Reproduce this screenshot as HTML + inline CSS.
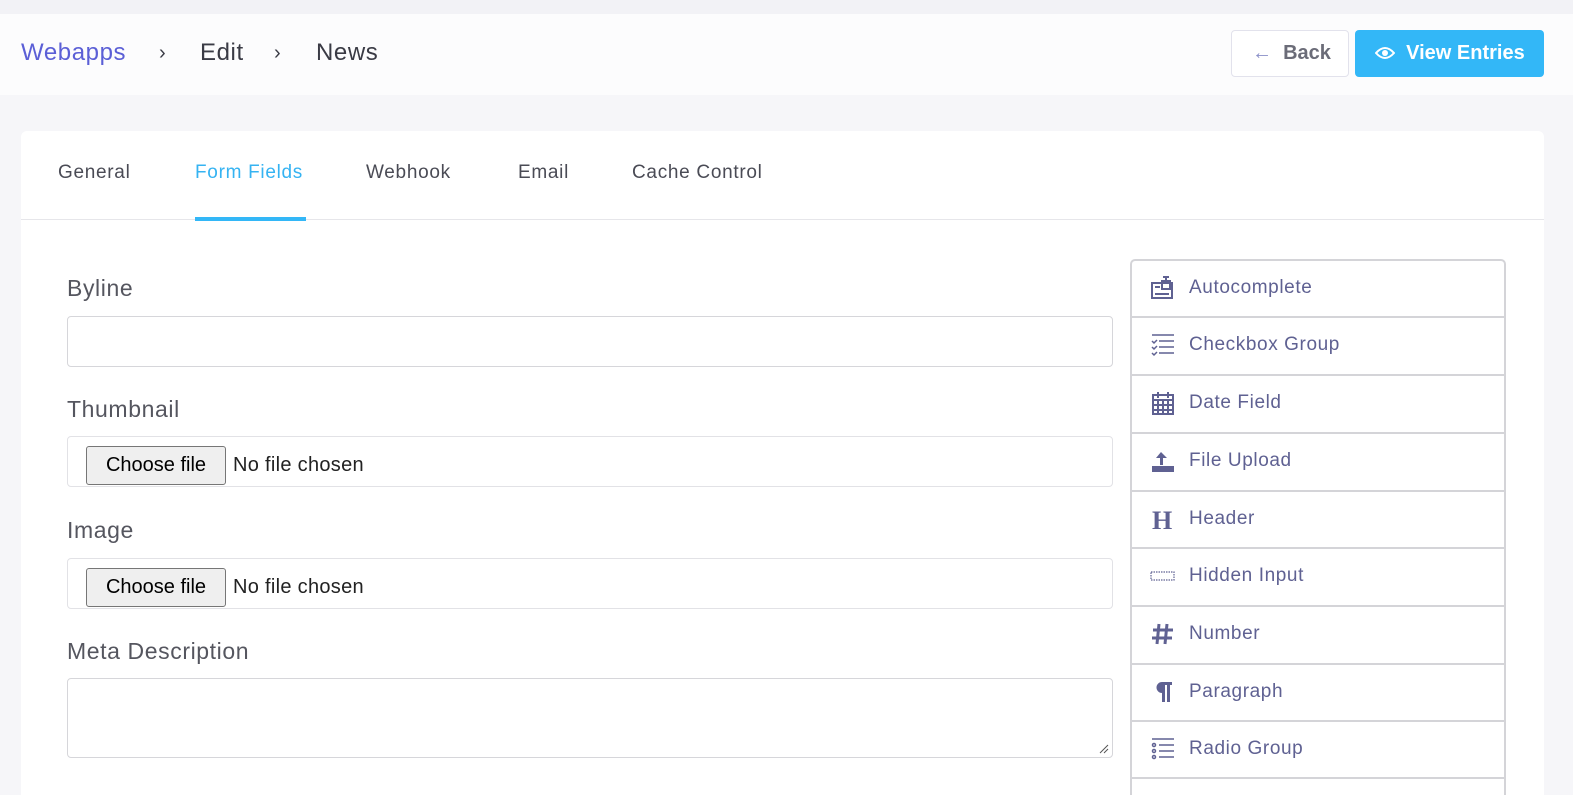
<!DOCTYPE html>
<html><head><meta charset="utf-8"><style>
*{box-sizing:border-box;margin:0;padding:0}
html{width:1573px;height:795px;overflow:hidden}
body{width:1573px;height:795px;overflow:hidden;background:#f6f6f9;font-family:"Liberation Sans",sans-serif;position:relative}
.a{position:absolute}
.hdr{left:0;top:14px;width:1573px;height:81px;background:#fcfcfd}
.top{left:0;top:0;width:1573px;height:14px;background:#f2f2f6}
.bc{top:39px;font-size:24px;color:#3a3b45;letter-spacing:0.6px}
.card{left:21px;top:131px;width:1523px;height:664px;background:#fff;border-radius:6px 6px 0 0}
.tab{top:162px;font-size:19px;color:#4a4b55;letter-spacing:0.7px}
.lbl{left:67px;font-size:23px;color:#55565f;letter-spacing:0.6px}
.inp{left:67px;width:1046px;border:1px solid #d6d6da;border-radius:4px;background:#fff}
.fb{position:absolute;left:18px;top:9px;width:140px;height:39px;border:1px solid #767676;border-radius:3px;background:#efefef;font-size:20px;color:#000;text-align:center;line-height:37px}
.nf{position:absolute;left:165px;top:17px;font-size:20px;color:#222;letter-spacing:0.3px}
.it{left:1130px;width:376px;height:58px;border:2px solid #d4d4d8;border-bottom:none;background:#fff}
.it span{position:absolute;left:57px;top:16px;font-size:19px;color:#5f6192;letter-spacing:0.6px}
.it svg{position:absolute;left:18px;top:14px}
</style></head><body>
<div class="a top"></div><div class="a hdr"></div>
<div class="a bc" style="left:21px;color:#5b5fd6">Webapps</div>
<div class="a bc" style="left:159px;font-size:20px;top:42px">›</div>
<div class="a bc" style="left:200px">Edit</div>
<div class="a bc" style="left:274px;font-size:20px;top:42px">›</div>
<div class="a bc" style="left:316px">News</div>
<div class="a" style="left:1231px;top:30px;width:118px;height:47px;border:1px solid #e2e2ec;border-radius:4px;background:#fff;font-size:20px;font-weight:bold;color:#6b6c78;line-height:45px;padding-left:20px"><span style="color:#8a8fc8;font-weight:normal">←</span>&nbsp; Back</div>
<div class="a" style="left:1355px;top:30px;width:189px;height:47px;border-radius:4px;background:#33b7f7;font-size:20px;font-weight:bold;color:#fff;line-height:47px;padding-left:20px">
<svg width="20" height="14" viewBox="0 0 20 14" style="vertical-align:-1px"><path d="M1 7Q10-3 19 7Q10 17 1 7Z" fill="none" stroke="#fff" stroke-width="2"/><circle cx="10" cy="7" r="3" fill="#fff"/></svg>&nbsp; View Entries</div>
<div class="a card"></div>
<div class="a tab" style="left:58px">General</div>
<div class="a tab" style="left:195px;color:#35b3f2">Form Fields</div>
<div class="a tab" style="left:366px">Webhook</div>
<div class="a tab" style="left:518px">Email</div>
<div class="a tab" style="left:632px">Cache Control</div>
<div class="a" style="left:21px;top:219px;width:1523px;height:1px;background:#e6e6ea"></div>
<div class="a" style="left:195px;top:217px;width:111px;height:4px;background:#33b7f7"></div>
<div class="a lbl" style="top:275px">Byline</div>
<div class="a inp" style="top:316px;height:51px"></div>
<div class="a lbl" style="top:396px">Thumbnail</div>
<div class="a inp" style="top:436px;height:51px;border-color:#e2e2e6"><div class="fb">Choose file</div><div class="nf">No file chosen</div></div>
<div class="a lbl" style="top:517px">Image</div>
<div class="a inp" style="top:558px;height:51px;border-color:#e2e2e6"><div class="fb">Choose file</div><div class="nf">No file chosen</div></div>
<div class="a lbl" style="top:638px">Meta Description</div>
<div class="a inp" style="top:678px;height:80px"><svg class="a" style="right:3px;bottom:3px" width="10" height="10"><path d="M9 1L1 9M9 5L5 9" stroke="#555" stroke-width="1"/></svg></div>

<div class="a it" style="top:259px;border-radius:5px 5px 0 0"><svg width="26" height="26" viewBox="0 0 26 26" fill="none" stroke="#5f6192" stroke-width="2"><rect x="2" y="8" width="20" height="15"/><rect x="12" y="6" width="8" height="8"/><path d="M16 2v4M13 2h6M5 12h5M5 19h14"/></svg><span>Autocomplete</span></div>
<div class="a it" style="top:316px"><svg width="26" height="26" viewBox="0 0 26 26" fill="none" stroke="#5f6192" stroke-width="1.5"><path d="M2 3h22M9 9h15M9 15h15M9 21h15M2 9l2 2 3-3M2 15l2 2 3-3M2 21l2 2 3-3"/></svg><span>Checkbox Group</span></div>
<div class="a it" style="top:374px"><svg width="26" height="26" viewBox="0 0 26 26" fill="none" stroke="#5f6192" stroke-width="2"><rect x="3" y="5" width="20" height="19"/><path d="M3 10h20M8 2v6M18 2v6M3 15h20M3 20h20M8 10v14M13 10v14M18 10v14"/></svg><span>Date Field</span></div>
<div class="a it" style="top:432px"><svg width="26" height="26" viewBox="0 0 26 26" fill="#5f6192"><path d="M11 4l-5 6h4v7h3v-7h4z"/><rect x="2" y="18" width="22" height="6"/></svg><span>File Upload</span></div>
<div class="a it" style="top:490px"><svg width="26" height="26" viewBox="0 0 26 26"><text x="2" y="23" font-family="Liberation Serif" font-weight="bold" font-size="26" fill="#5f6192">H</text></svg><span>Header</span></div>
<div class="a it" style="top:547px"><svg width="26" height="26" viewBox="0 0 26 26" fill="none" stroke="#5f6192" stroke-width="1.2" stroke-dasharray="1.5 1"><rect x="1" y="9" width="23" height="8"/></svg><span>Hidden Input</span></div>
<div class="a it" style="top:605px"><svg width="26" height="26" viewBox="0 0 26 26"><path d="M9 3L7 23M17 3L15 23M3 9h20M2 17h20" stroke="#5f6192" stroke-width="3"/></svg><span>Number</span></div>
<div class="a it" style="top:663px"><svg width="26" height="26" viewBox="0 0 26 26" fill="#5f6192"><path d="M10 3h12v3h-2v17h-3V6h-2v17h-3V14a5.5 5.5 0 0 1 0-11z"/></svg><span>Paragraph</span></div>
<div class="a it" style="top:720px"><svg width="26" height="26" viewBox="0 0 26 26" fill="none" stroke="#5f6192" stroke-width="1.5"><path d="M2 3h22M9 9h15M9 15h15M9 21h15"/><circle cx="4" cy="9" r="1.5"/><circle cx="4" cy="15" r="1.5"/><circle cx="4" cy="21" r="1.5"/></svg><span>Radio Group</span></div>
<div class="a it" style="top:777px;height:18px"></div>
</body></html>
